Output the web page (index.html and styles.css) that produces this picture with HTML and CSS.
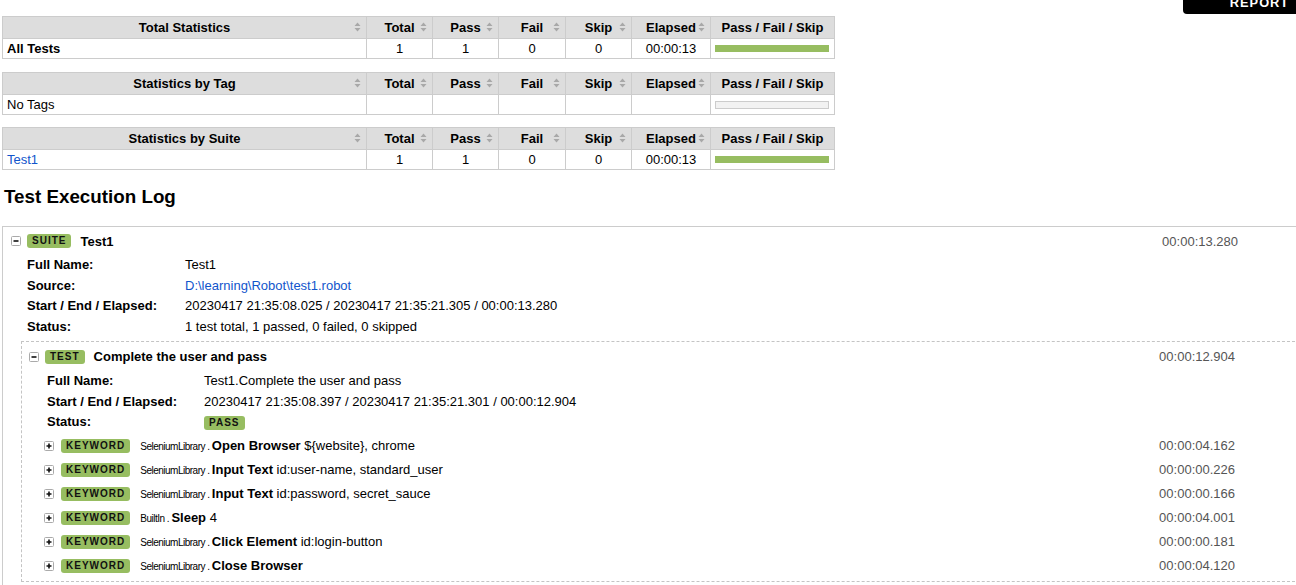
FILE: index.html
```html
<!DOCTYPE html>
<html>
<head>
<meta charset="utf-8">
<title>Test1 Log</title>
<link rel="stylesheet" href="styles.css">
</head>
<body>
<div class="page">
  <a class="report-link" href="#">REPORT</a>

  <table class="stats">
    <colgroup><col class="c-name"><col class="c-num"><col class="c-num"><col class="c-fail"><col class="c-num"><col class="c-elapsed"><col class="c-graph"></colgroup>
    <thead>
      <tr>
        <th><svg class="sort" viewBox="0 0 7 10"><path d="M3.5 0.5L6.5 4H0.5Z M0.5 6H6.5L3.5 9.5Z"/></svg>Total Statistics</th>
        <th><svg class="sort" viewBox="0 0 7 10"><path d="M3.5 0.5L6.5 4H0.5Z M0.5 6H6.5L3.5 9.5Z"/></svg>Total</th>
        <th><svg class="sort" viewBox="0 0 7 10"><path d="M3.5 0.5L6.5 4H0.5Z M0.5 6H6.5L3.5 9.5Z"/></svg>Pass</th>
        <th><svg class="sort" viewBox="0 0 7 10"><path d="M3.5 0.5L6.5 4H0.5Z M0.5 6H6.5L3.5 9.5Z"/></svg>Fail</th>
        <th><svg class="sort" viewBox="0 0 7 10"><path d="M3.5 0.5L6.5 4H0.5Z M0.5 6H6.5L3.5 9.5Z"/></svg>Skip</th>
        <th><svg class="sort" viewBox="0 0 7 10"><path d="M3.5 0.5L6.5 4H0.5Z M0.5 6H6.5L3.5 9.5Z"/></svg>Elapsed</th>
        <th class="plain">Pass / Fail / Skip</th>
      </tr>
    </thead>
    <tbody>
      <tr>
        <td class="name strong">All Tests</td>
        <td>1</td><td>1</td><td>0</td><td>0</td><td>00:00:13</td>
        <td class="graph-cell"><div class="graph full"><div class="pass-bar" style="width:100%"></div></div></td>
      </tr>
    </tbody>
  </table>

  <table class="stats tight">
    <colgroup><col class="c-name"><col class="c-num"><col class="c-num"><col class="c-fail"><col class="c-num"><col class="c-elapsed"><col class="c-graph"></colgroup>
    <thead>
      <tr>
        <th><svg class="sort" viewBox="0 0 7 10"><path d="M3.5 0.5L6.5 4H0.5Z M0.5 6H6.5L3.5 9.5Z"/></svg>Statistics by Tag</th>
        <th><svg class="sort" viewBox="0 0 7 10"><path d="M3.5 0.5L6.5 4H0.5Z M0.5 6H6.5L3.5 9.5Z"/></svg>Total</th>
        <th><svg class="sort" viewBox="0 0 7 10"><path d="M3.5 0.5L6.5 4H0.5Z M0.5 6H6.5L3.5 9.5Z"/></svg>Pass</th>
        <th><svg class="sort" viewBox="0 0 7 10"><path d="M3.5 0.5L6.5 4H0.5Z M0.5 6H6.5L3.5 9.5Z"/></svg>Fail</th>
        <th><svg class="sort" viewBox="0 0 7 10"><path d="M3.5 0.5L6.5 4H0.5Z M0.5 6H6.5L3.5 9.5Z"/></svg>Skip</th>
        <th><svg class="sort" viewBox="0 0 7 10"><path d="M3.5 0.5L6.5 4H0.5Z M0.5 6H6.5L3.5 9.5Z"/></svg>Elapsed</th>
        <th class="plain">Pass / Fail / Skip</th>
      </tr>
    </thead>
    <tbody>
      <tr>
        <td class="name">No Tags</td>
        <td></td><td></td><td></td><td></td><td></td>
        <td class="graph-cell"><div class="graph"></div></td>
      </tr>
    </tbody>
  </table>

  <table class="stats">
    <colgroup><col class="c-name"><col class="c-num"><col class="c-num"><col class="c-fail"><col class="c-num"><col class="c-elapsed"><col class="c-graph"></colgroup>
    <thead>
      <tr>
        <th><svg class="sort" viewBox="0 0 7 10"><path d="M3.5 0.5L6.5 4H0.5Z M0.5 6H6.5L3.5 9.5Z"/></svg>Statistics by Suite</th>
        <th><svg class="sort" viewBox="0 0 7 10"><path d="M3.5 0.5L6.5 4H0.5Z M0.5 6H6.5L3.5 9.5Z"/></svg>Total</th>
        <th><svg class="sort" viewBox="0 0 7 10"><path d="M3.5 0.5L6.5 4H0.5Z M0.5 6H6.5L3.5 9.5Z"/></svg>Pass</th>
        <th><svg class="sort" viewBox="0 0 7 10"><path d="M3.5 0.5L6.5 4H0.5Z M0.5 6H6.5L3.5 9.5Z"/></svg>Fail</th>
        <th><svg class="sort" viewBox="0 0 7 10"><path d="M3.5 0.5L6.5 4H0.5Z M0.5 6H6.5L3.5 9.5Z"/></svg>Skip</th>
        <th><svg class="sort" viewBox="0 0 7 10"><path d="M3.5 0.5L6.5 4H0.5Z M0.5 6H6.5L3.5 9.5Z"/></svg>Elapsed</th>
        <th class="plain">Pass / Fail / Skip</th>
      </tr>
    </thead>
    <tbody>
      <tr>
        <td class="name"><a href="#" class="link">Test1</a></td>
        <td>1</td><td>1</td><td>0</td><td>0</td><td>00:00:13</td>
        <td class="graph-cell"><div class="graph full"><div class="pass-bar" style="width:100%"></div></div></td>
      </tr>
    </tbody>
  </table>

  <h2 class="log-title">Test Execution Log</h2>

  <div class="suite">
    <div class="el-header">
      <svg class="toggle" viewBox="0 0 10 10"><rect x="0.5" y="0.5" width="9" height="9" rx="1"/><path d="M2.5 5H7.5"/></svg>
      <span class="label">SUITE</span>
      <span class="el-name">Test1</span>
      <span class="elapsed">00:00:13.280</span>
    </div>
    <div class="meta">
      <span class="meta-key">Full Name:</span><span>Test1</span>
      <span class="meta-key">Source:</span><span><a href="#" class="link">D:\learning\Robot\test1.robot</a></span>
      <span class="meta-key">Start / End / Elapsed:</span><span>20230417 21:35:08.025 / 20230417 21:35:21.305 / 00:00:13.280</span>
      <span class="meta-key">Status:</span><span>1 test total, 1 passed, 0 failed, 0 skipped</span>
    </div>

    <div class="children">
      <div class="test">
        <div class="el-header">
          <svg class="toggle" viewBox="0 0 10 10"><rect x="0.5" y="0.5" width="9" height="9" rx="1"/><path d="M2.5 5H7.5"/></svg>
          <span class="label">TEST</span>
          <span class="el-name">Complete the user and pass</span>
          <span class="elapsed">00:00:12.904</span>
        </div>
        <div class="meta">
          <span class="meta-key">Full Name:</span><span>Test1.Complete the user and pass</span>
          <span class="meta-key">Start / End / Elapsed:</span><span>20230417 21:35:08.397 / 20230417 21:35:21.301 / 00:00:12.904</span>
          <span class="meta-key">Status:</span><span><span class="label status">PASS</span></span>
        </div>

        <div class="kws">
          <div class="kw">
            <svg class="toggle" viewBox="0 0 10 10"><rect x="0.5" y="0.5" width="9" height="9" rx="1"/><path d="M2.5 5H7.5M5 2.5V7.5"/></svg>
            <span class="label">KEYWORD</span>
            <span class="kw-name"><span class="parent-name">SeleniumLibrary . </span><b>Open Browser</b> ${website}, chrome</span>
            <span class="elapsed">00:00:04.162</span>
          </div>
          <div class="kw">
            <svg class="toggle" viewBox="0 0 10 10"><rect x="0.5" y="0.5" width="9" height="9" rx="1"/><path d="M2.5 5H7.5M5 2.5V7.5"/></svg>
            <span class="label">KEYWORD</span>
            <span class="kw-name"><span class="parent-name">SeleniumLibrary . </span><b>Input Text</b> id:user-name, standard_user</span>
            <span class="elapsed">00:00:00.226</span>
          </div>
          <div class="kw">
            <svg class="toggle" viewBox="0 0 10 10"><rect x="0.5" y="0.5" width="9" height="9" rx="1"/><path d="M2.5 5H7.5M5 2.5V7.5"/></svg>
            <span class="label">KEYWORD</span>
            <span class="kw-name"><span class="parent-name">SeleniumLibrary . </span><b>Input Text</b> id:password, secret_sauce</span>
            <span class="elapsed">00:00:00.166</span>
          </div>
          <div class="kw">
            <svg class="toggle" viewBox="0 0 10 10"><rect x="0.5" y="0.5" width="9" height="9" rx="1"/><path d="M2.5 5H7.5M5 2.5V7.5"/></svg>
            <span class="label">KEYWORD</span>
            <span class="kw-name"><span class="parent-name">BuiltIn . </span><b>Sleep</b> 4</span>
            <span class="elapsed">00:00:04.001</span>
          </div>
          <div class="kw">
            <svg class="toggle" viewBox="0 0 10 10"><rect x="0.5" y="0.5" width="9" height="9" rx="1"/><path d="M2.5 5H7.5M5 2.5V7.5"/></svg>
            <span class="label">KEYWORD</span>
            <span class="kw-name"><span class="parent-name">SeleniumLibrary . </span><b>Click Element</b> id:login-button</span>
            <span class="elapsed">00:00:00.181</span>
          </div>
          <div class="kw">
            <svg class="toggle" viewBox="0 0 10 10"><rect x="0.5" y="0.5" width="9" height="9" rx="1"/><path d="M2.5 5H7.5M5 2.5V7.5"/></svg>
            <span class="label">KEYWORD</span>
            <span class="kw-name"><span class="parent-name">SeleniumLibrary . </span><b>Close Browser</b></span>
            <span class="elapsed">00:00:04.120</span>
          </div>
        </div>
      </div>
    </div>
  </div>
</div>
</body>
</html>
```

FILE: styles.css
```css
html, body {
  margin: 0;
  padding: 0;
  overflow: hidden;
  background: #fff;
}

body {
  font-family: "Liberation Sans", Arial, Helvetica, sans-serif;
  font-size: 13px;
  color: #000;
}

.page {
  position: relative;
  width: 1336px;
  box-sizing: border-box;
  padding: 16px 2px 0;
}

.report-link {
  position: absolute;
  top: -8.5px;
  right: 0;
  width: 153px;
  height: 22.5px;
  line-height: 22.5px;
  background: #000;
  color: #fff;
  font-weight: bold;
  font-size: 12.8px;
  letter-spacing: 1px;
  text-align: center;
  text-decoration: none;
  border-bottom-left-radius: 4px;
}

.link {
  color: #15c;
  text-decoration: none;
}

/* statistics tables */
.stats {
  border-collapse: collapse;
  table-layout: fixed;
  width: 832px;
  margin-bottom: 13px;
}

.stats.tight {
  margin-bottom: 12px;
}

.c-name { width: 364px; }
.c-num { width: 66px; }
.c-fail { width: 67px; }
.c-elapsed { width: 79px; }
.c-graph { width: 124px; }

.stats th {
  background: #ddd;
  border: 1px solid #ccc;
  padding: 3px 5px 3px 12px;
  line-height: 15px;
  font-weight: bold;
  text-align: center;
  white-space: nowrap;
}

.stats th.plain {
  padding: 3px 4px;
}

.sort {
  float: right;
  width: 7px;
  height: 10px;
  margin-top: 2px;
  fill: #a8a8a8;
}

.stats td {
  border: 1px solid #ccc;
  padding: 2px 5px;
  line-height: 15px;
  text-align: center;
}

.stats td.name {
  text-align: left;
  padding-left: 4px;
}

.stats td.strong {
  font-weight: bold;
}

.stats td.graph-cell {
  padding: 2px 5px 2px 4px;
}

.graph {
  height: 8px;
  box-sizing: border-box;
  border: 1px solid #ccc;
  background: #f2f2f2;
}

.graph.full {
  height: 7px;
  border-color: #97bd61;
}

.pass-bar {
  height: 100%;
  background: #97bd61;
}

/* log */
.log-title {
  font-size: 18.8px;
  line-height: 22px;
  font-weight: bold;
  margin: 16px 0 18px 2px;
}

.suite {
  border: 1px solid #ccc;
  padding-bottom: 12px;
}

.el-header {
  display: flex;
  align-items: center;
  height: 28px;
  padding: 0 95px 0 8px;
}

.toggle {
  flex: none;
  width: 10px;
  height: 10px;
}

.toggle rect {
  fill: #fff;
  stroke: #aaa;
}

.toggle path {
  stroke: #111;
  stroke-width: 1.6;
  fill: none;
}

.label {
  display: inline-block;
  margin-left: 6px;
  padding: 1px 5px;
  background: #97bd61;
  border-radius: 3px;
  font-size: 10px;
  line-height: 12px;
  font-weight: bold;
  letter-spacing: 1px;
  color: #111;
  vertical-align: middle;
}

.label.status {
  margin-left: 0;
}

.el-name {
  margin-left: 9px;
  font-weight: bold;
}

.elapsed {
  margin-left: auto;
  color: #555;
}

.meta {
  display: grid;
  grid-template-columns: 158px auto;
  grid-auto-rows: 20.5px;
  line-height: 20.5px;
  padding: 0 0 4px 24px;
}

.meta-key {
  font-weight: bold;
}

.children {
  margin: 0 3px 0 18px;
}

.test {
  border-top: 1px dashed #c4c4c4;
  border-left: 1px dashed #c4c4c4;
  border-bottom: 1px dashed #c4c4c4;
}

.test > .el-header {
  height: 29px;
  padding-left: 7px;
}

.test > .meta {
  grid-template-columns: 157px auto;
  padding: 0 0 1px 25px;
}

.kws {
  padding: 0 0 3.5px 22px;
}

.kw {
  display: flex;
  align-items: center;
  height: 24px;
  padding-right: 95px;
}

.kw .label {
  margin-left: 7px;
}

.kw-name {
  margin-left: 10px;
  white-space: pre;
}

.parent-name {
  font-size: 10px;
  letter-spacing: -0.5px;
}
```
